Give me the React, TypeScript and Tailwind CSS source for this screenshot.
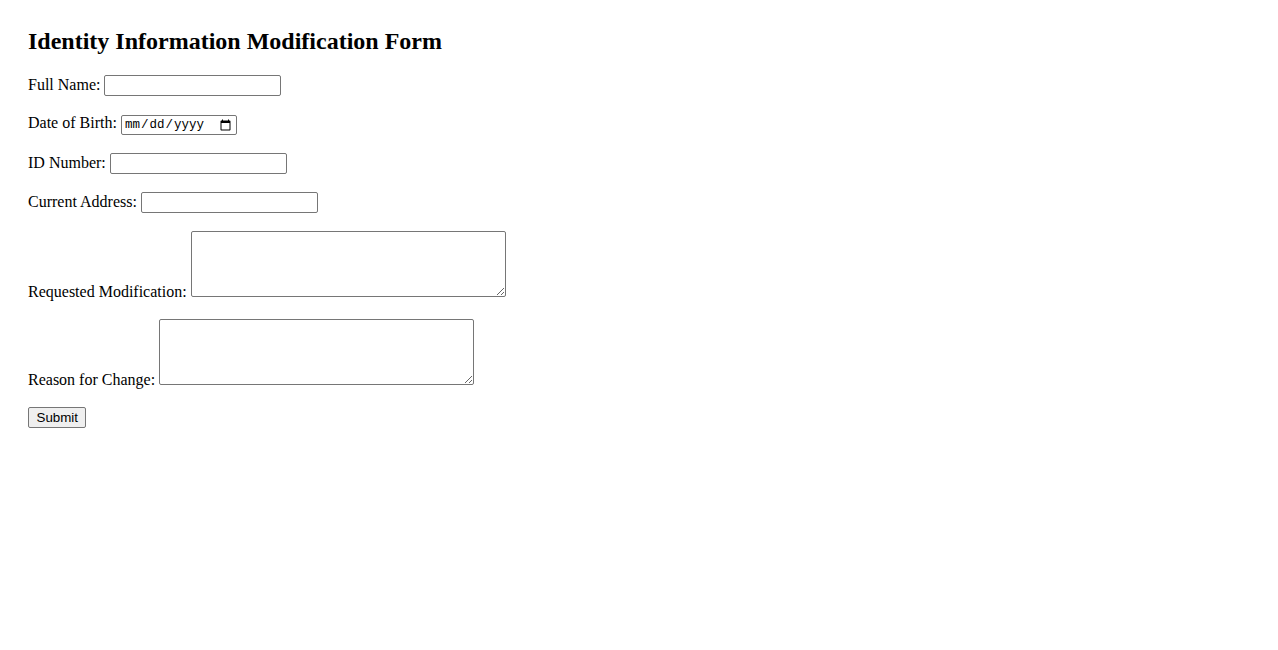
export default function App() {
  const inputClass =
    "h-[21px] w-[177px] rounded-[2px] border border-[#767676] bg-white px-[2px] align-baseline font-['Liberation_Sans',Arial,sans-serif] text-[13.33px] leading-[normal] text-black";
  const areaClass =
    "h-[66px] w-[315px] rounded-[2px] border border-[#767676] bg-white px-[2px] py-[2px] align-baseline font-['Liberation_Mono',monospace] text-[13.33px] leading-[normal] text-black";

  return (
    <div className="min-h-screen bg-white px-7 pt-7 font-['Liberation_Serif','Times_New_Roman',serif] text-[16px] leading-[normal] text-black">
      <h2 className="mb-[19.92px] text-[24px] font-bold leading-[normal]">
        Identity Information Modification Form
      </h2>

      <form onSubmit={(e) => e.preventDefault()}>
        <div className="mb-[18px]">
          <label htmlFor="fullName">Full Name:</label>{" "}
          <input id="fullName" type="text" className={inputClass} />
        </div>

        <div className="mb-[18px]">
          <label htmlFor="dob">Date of Birth:</label>{" "}
          <input
            id="dob"
            type="date"
            className="h-[20px] w-[116px] rounded-[2px] border border-[#767676] bg-white px-[2px] align-baseline font-['Liberation_Mono',monospace] text-[12.5px] leading-[normal] text-black"
          />
        </div>

        <div className="mb-[18px]">
          <label htmlFor="idNumber">ID Number:</label>{" "}
          <input id="idNumber" type="text" className={inputClass} />
        </div>

        <div className="mb-[18px]">
          <label htmlFor="address">Current Address:</label>{" "}
          <input id="address" type="text" className={inputClass} />
        </div>

        <div className="mb-[18px]">
          <label htmlFor="modification">Requested Modification:</label>{" "}
          <textarea id="modification" className={areaClass} />
        </div>

        <div className="mb-[18px]">
          <label htmlFor="reason">Reason for Change:</label>{" "}
          <textarea id="reason" className={areaClass} />
        </div>

        <button
          type="submit"
          className="h-[21px] rounded-[2px] border border-[#767676] bg-[#efefef] px-[7.5px] font-['Liberation_Sans',Arial,sans-serif] text-[13.33px] leading-[normal] text-black"
        >
          Submit
        </button>
      </form>
    </div>
  );
}
